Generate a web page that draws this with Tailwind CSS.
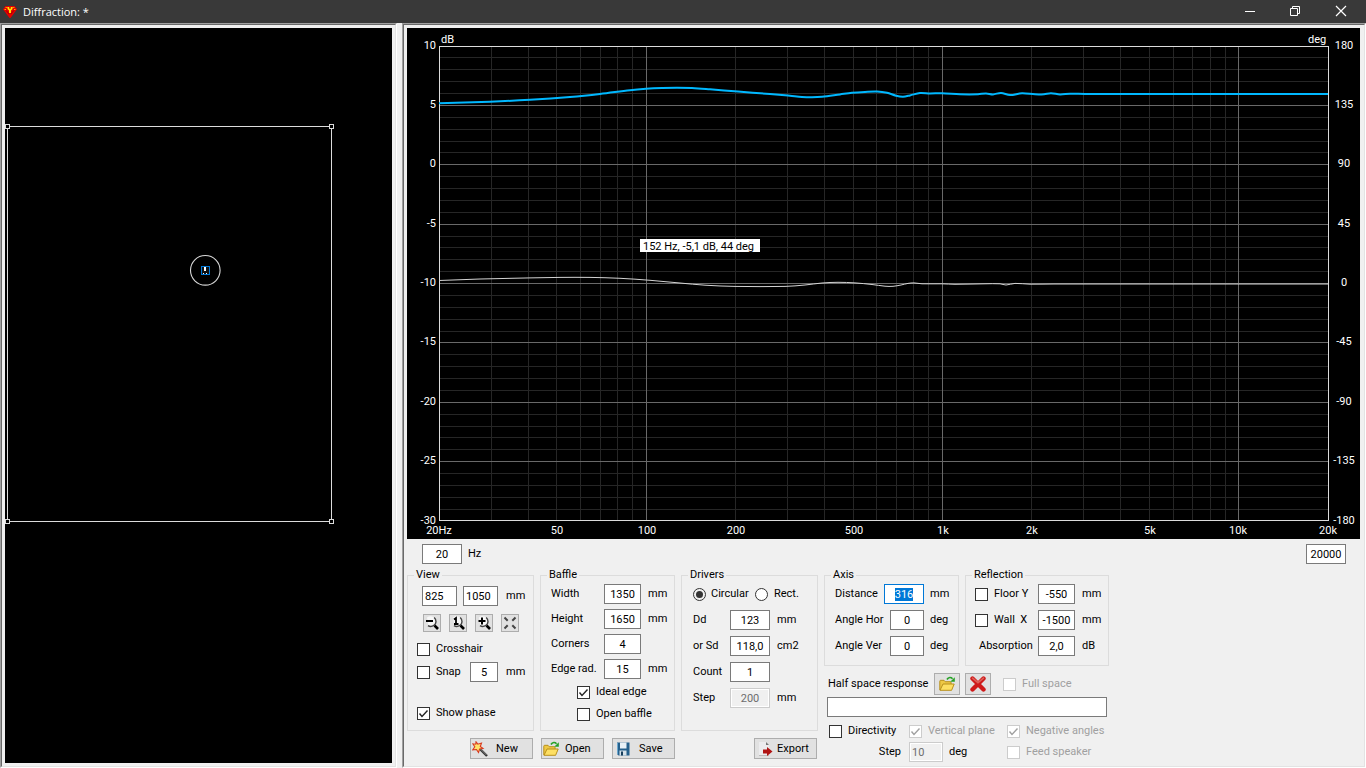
<!DOCTYPE html>
<html lang="en">
<head>
<meta charset="utf-8">
<meta name="viewport" content="width=device-width, initial-scale=1">
<title>Diffraction</title>
<script src="https://cdn.jsdelivr.net/npm/@tailwindcss/browser@4"></script>
</head>
<body class="flex min-h-screen flex-col bg-[#f0f0f0] font-[Roboto,'Liberation_Sans',sans-serif] text-[11px] leading-[14px] text-black">

<!-- Shared symbols -->
<svg class="hidden" aria-hidden="true">
  <symbol id="tick" viewBox="0 0 13 13"><path d="M2.5 6.5 5 9.5 10.5 3.5" fill="none" stroke="currentColor" stroke-width="1.4"/></symbol>
  <symbol id="folder" viewBox="0 0 16 16">
    <path d="M.8 14V5.200q0-.9.9-.9h3.300l1.200 1.400h5q.9 0 .9.900V8" fill="#eec845" stroke="#b8901c"/>
    <path d="M1 14.300 4 8h11.200l-2.600 6.300Z" fill="#fddf63" stroke="#b8901c"/>
    <path d="M8 3.500C9.500 1 12 1 13.500 2.700" fill="none" stroke="#27a127" stroke-width="1.700"/>
    <path d="M15.800 1.200v4.600h-4.600Z" fill="#27a127"/>
  </symbol>
  <symbol id="lens" viewBox="0 0 16 16">
    <path d="M3 2.600Q6.500 0 10 2.600 12.600 6 10.500 9.500 8 12 4.500 10.700" fill="#f8f8f8"/>
    <path d="M10.200 2.500C12.800 5 12.500 8.500 10 10.300 8 11.800 5.500 11.700 4 10.600" fill="none" stroke="#444" stroke-width="1.400"/>
    <path d="M10.500 10.500 14 14" stroke="#000" stroke-width="2.600" fill="none"/>
  </symbol>
</svg>

<header class="flex h-[23px] items-center bg-[#393939] text-white">
  <svg class="ml-[3px] h-[14px] w-[14px]" viewBox="0 0 14 14" aria-hidden="true">
    <path d="M2.500 1h9L14 4.200 7.500 13h-1L0 4.200Z" fill="#e60000"/>
    <path d="M2.500 2.500h2M9.500 2.500h2" stroke="#ff8a00" stroke-width="1"/>
    <path d="M1.500 4.500h1.500M11 4.500h1.500" stroke="#ffb000" stroke-width="1"/>
    <path d="M4.500 2h5v2L8 5.500V8H6V5.500L4.500 4Z" fill="#ffe600"/>
    <path d="M6.200 2h1.600v1.800H6.200Z" fill="#e00000"/>
    <path d="m3.200 5.500 3 3.500M10.800 5.500l-3 3.500" stroke="#8d0000" stroke-width=".8"/>
  </svg>
  <h1 class="ml-[6px] font-['Open_Sans','Noto_Sans',sans-serif] text-[11px]">Diffraction: *</h1>
  <div class="ml-auto flex items-center gap-[30px] pr-[16px]">
    <button type="button" aria-label="Minimize" class="h-4 w-4"><svg viewBox="0 0 16 16" class="h-4 w-4"><path d="M3 7.500h10" stroke="#fff"/></svg></button>
    <button type="button" aria-label="Restore" class="h-4 w-4"><svg viewBox="0 0 16 16" class="h-4 w-4"><path d="M2.500 4.500h7v7h-7ZM4.500 4.500v-2h7v7h-2" fill="none" stroke="#fff"/></svg></button>
    <button type="button" aria-label="Close" class="h-4 w-4"><svg viewBox="0 0 16 16" class="h-4 w-4"><path d="m2 2 10 10M12 2 2 12" stroke="#fff" stroke-width="1.200"/></svg></button>
  </div>
</header>

<div class="grid flex-1 grid-cols-[minmax(0,397fr)_minmax(0,964fr)] gap-[5px]">

  <!-- Baffle editor -->
  <section aria-label="Baffle editor" class="flex border-t border-r border-b border-l border-t-[#a0a0a0] border-r-white border-b-white border-l-[#a0a0a0]">
    <div class="flex flex-1 border border-t-[#696969] border-r-[#e3e3e3] border-b-[#e3e3e3] border-l-[#696969] p-[3px]">
      <div class="flex-1 bg-black">
        <svg class="block h-auto w-full" viewBox="5 28 387 735" role="img" aria-label="Baffle outline with driver">
          <g fill="none" stroke="#dcdcdc" shape-rendering="crispEdges">
            <path d="M7.500 126.500H331.500V521.500H7.500Z"/>
            <g fill="#000"><rect x="5.500" y="124.500" width="4" height="4"/><rect x="329.500" y="124.500" width="4" height="4"/><rect x="5.500" y="519.500" width="4" height="4"/><rect x="329.500" y="519.500" width="4" height="4"/></g>
          </g>
          <circle cx="205.300" cy="270.300" r="14.800" fill="none" stroke="#d8d8d8" stroke-width="1.100"/>
          <rect x="201.500" y="266.500" width="8" height="8" fill="#111" stroke="#0078d7" shape-rendering="crispEdges"/>
          <path d="M204 267h2v4h-2ZM203 273h1v1h-1ZM206 273h1v1h-1Z" fill="#fff" shape-rendering="crispEdges"/>
        </svg>
      </div>
    </div>
  </section>

  <section aria-label="Response" class="flex border-t border-r border-b border-l border-t-[#a0a0a0] border-r-white border-b-white border-l-[#a0a0a0]">
    <div class="min-w-0 flex-1 border border-t-[#696969] border-r-[#e3e3e3] border-b-[#e3e3e3] border-l-[#696969] pt-[3px] pr-1 pl-[3px]">

      <svg class="block h-auto w-full bg-black" viewBox="407 28 953 511" role="img" aria-label="Frequency response">
        <g fill="none" shape-rendering="crispEdges">
          <path id="minor" stroke="#262626"/>
          <path id="major" stroke="#696969"/>
          <path d="M439.500 46.500H1328.500V520.500H439.500Z" stroke="#dcdcdc"/>
        </g>
        <path id="phase" fill="none" stroke="#d4d4d4"/>
        <path id="level" fill="none" stroke="#00b8ff" stroke-width="2"/>
        <g fill="#fff">
          <text x="441" y="43">dB</text><text x="1308" y="43">deg</text>
          <g text-anchor="end">
            <text x="436" y="49">10</text><text x="436" y="108">5</text><text x="436" y="167">0</text><text x="436" y="227">-5</text><text x="436" y="286">-10</text><text x="436" y="345">-15</text><text x="436" y="405">-20</text><text x="436" y="464">-25</text><text x="436" y="524">-30</text>
          </g>
          <g text-anchor="middle">
            <text x="1344" y="49">180</text><text x="1344" y="108">135</text><text x="1344" y="167">90</text><text x="1344" y="227">45</text><text x="1344" y="286">0</text><text x="1344" y="345">-45</text><text x="1344" y="405">-90</text><text x="1344" y="464">-135</text><text x="1344" y="524">-180</text>
            <text x="439" y="534">20Hz</text><text x="557" y="534">50</text><text x="647" y="534">100</text><text x="736" y="534">200</text><text x="854" y="534">500</text><text x="943" y="534">1k</text><text x="1032" y="534">2k</text><text x="1150" y="534">5k</text><text x="1238" y="534">10k</text><text x="1328" y="534">20k</text>
          </g>
        </g>
        <rect x="640" y="239" width="120" height="13" fill="#fff"/>
        <text x="643" y="250" fill="#000">152 Hz, -5,1 dB, 44 deg</text>
      </svg>

      <div class="mt-[5px] flex items-center justify-between pr-[14px] pl-[15px]">
        <div class="flex items-center gap-[6px]"><input id="fmin" value="20" class="h-5 w-10 border border-[#7a7a7a] bg-white text-center"><label for="fmin">Hz</label></div>
        <input aria-label="Maximum frequency" value="20000" class="h-5 w-10 border border-[#7a7a7a] bg-white text-center">
      </div>

      <div class="mt-1 flex gap-[6px]">
        <div>
          <div class="flex gap-[6px]">

            <fieldset class="w-[127px] min-w-0 border border-[#dcdcdc]">
              <legend class="ml-[6px] px-[2px]">View</legend>
              <div class="pt-1 pl-[9px]">
                <div class="flex items-center gap-[6px] pl-[5px]">
                  <input aria-label="View width" value="825" class="h-5 w-[35px] border border-[#7a7a7a] bg-white pl-[2px]">
                  <input aria-label="View height" value="1050" class="h-5 w-[35px] border border-[#7a7a7a] bg-white pl-[2px]">
                  <span class="pl-[2px]">mm</span>
                </div>
                <div class="mt-2 flex gap-2 pl-[6px]">
                  <button type="button" aria-label="Zoom out" class="grid h-[18px] w-[18px] place-items-center border border-[#adadad] bg-[#e1e1e1]"><svg viewBox="0 0 16 16" class="h-4 w-4"><use href="#lens"/><path d="M2 6h7" stroke="#000" stroke-width="2"/></svg></button>
                  <button type="button" aria-label="Actual size" class="grid h-[18px] w-[18px] place-items-center border border-[#adadad] bg-[#e1e1e1]"><svg viewBox="0 0 16 16" class="h-4 w-4"><use href="#lens"/><path d="M4 4.500 6 3v6M4 9h4.500" fill="none" stroke="#000" stroke-width="1.800"/></svg></button>
                  <button type="button" aria-label="Zoom in" class="grid h-[18px] w-[18px] place-items-center border border-[#adadad] bg-[#e1e1e1]"><svg viewBox="0 0 16 16" class="h-4 w-4"><use href="#lens"/><path d="M2.500 6h7M6 2.500v7" stroke="#000" stroke-width="2"/></svg></button>
                  <button type="button" aria-label="Fit to window" class="grid h-[18px] w-[18px] place-items-center border border-[#adadad] bg-[#e1e1e1]"><svg viewBox="0 0 16 16" class="h-4 w-4"><path d="m2.500 2.500 3.200 3.200M13.500 2.500l-3.200 3.200M2.500 13.500l3.200-3.200M13.500 13.500l-3.200-3.200" stroke="#444" stroke-width="2"/></svg></button>
                </div>
                <label class="mt-[9px] flex h-4 items-center gap-[6px]"><input type="checkbox" class="h-[13px] w-[13px] appearance-none border border-[#333] bg-white">Crosshair</label>
                <div class="mt-[5px] flex h-5 items-center">
                  <label class="flex w-[53px] items-center gap-[6px]"><input type="checkbox" class="h-[13px] w-[13px] appearance-none border border-[#333] bg-white">Snap</label>
                  <input aria-label="Snap step" value="5" class="h-5 w-7 border border-[#7a7a7a] bg-white text-center"><span class="pl-2">mm</span>
                </div>
                <label class="mt-[23px] flex h-4 items-center gap-[6px]"><span class="grid"><input type="checkbox" checked class="peer h-[13px] w-[13px] appearance-none border border-[#333] bg-white [grid-area:1/1]"><svg class="invisible h-[13px] w-[13px] text-[#222] [grid-area:1/1] peer-checked:visible"><use href="#tick"/></svg></span>Show phase</label>
              </div>
            </fieldset>

            <fieldset class="w-[135px] min-w-0 border border-[#dcdcdc]">
              <legend class="ml-[6px] px-[2px]">Baffle</legend>
              <div class="grid grid-cols-[53px_37px_auto] items-center gap-y-[5px] pt-[2px] pl-[10px]">
                <label for="bw">Width</label><input id="bw" value="1350" class="h-5 border border-[#7a7a7a] bg-white text-center"><span class="pl-[7px]">mm</span>
                <label for="bh">Height</label><input id="bh" value="1650" class="h-5 border border-[#7a7a7a] bg-white text-center"><span class="pl-[7px]">mm</span>
                <label for="bc">Corners</label><input id="bc" value="4" class="h-5 border border-[#7a7a7a] bg-white text-center"><span></span>
                <label for="be">Edge rad.</label><input id="be" value="15" class="h-5 border border-[#7a7a7a] bg-white text-center"><span class="pl-[7px]">mm</span>
              </div>
              <div class="mt-[5px] flex flex-col gap-[6px] pl-9">
                <label class="flex h-4 items-center gap-[6px]"><span class="grid"><input type="checkbox" checked class="peer h-[13px] w-[13px] appearance-none border border-[#333] bg-white [grid-area:1/1]"><svg class="invisible h-[13px] w-[13px] text-[#222] [grid-area:1/1] peer-checked:visible"><use href="#tick"/></svg></span>Ideal edge</label>
                <label class="flex h-4 items-center gap-[6px]"><input type="checkbox" class="h-[13px] w-[13px] appearance-none border border-[#333] bg-white">Open baffle</label>
              </div>
              <div class="h-2"></div>
            </fieldset>

            <fieldset class="w-[137px] min-w-0 border border-[#dcdcdc]">
              <legend class="ml-[6px] px-[2px]">Drivers</legend>
              <div class="flex h-[22px] items-center pt-[2px] pl-[11px]">
                <label class="flex w-[62px] items-center gap-[5px]"><input type="radio" name="shape" checked class="h-[13px] w-[13px] appearance-none rounded-full border border-[#333] bg-white bg-clip-content p-[2px] checked:bg-[#333]">Circular</label>
                <label class="flex items-center gap-[6px]"><input type="radio" name="shape" class="h-[13px] w-[13px] appearance-none rounded-full border border-[#333] bg-white checked:bg-[#333]">Rect.</label>
              </div>
              <div class="grid grid-cols-[37px_40px_auto] items-center gap-y-[6px] pt-[6px] pl-[11px]">
                <label for="dd">Dd</label><input id="dd" value="123" class="h-5 border border-[#7a7a7a] bg-white text-center"><span class="pl-[7px]">mm</span>
                <label for="sd">or Sd</label><input id="sd" value="118,0" class="h-5 border border-[#7a7a7a] bg-white text-center"><span class="pl-[7px]">cm2</span>
                <label for="cnt">Count</label><input id="cnt" value="1" class="h-5 border border-[#7a7a7a] bg-white text-center"><span></span>
                <label for="dstep">Step</label><input id="dstep" disabled value="200" class="h-5 border border-[#ccc] bg-[#f0f0f0] text-center text-[#6d6d6d] shadow-[inset_0_0_0_1px_#fff]"><span class="pl-[7px]">mm</span>
              </div>
            </fieldset>
          </div>

          <div class="mt-[7px] flex gap-2 pl-[63px]">
            <button type="button" class="flex h-[21px] w-[63px] items-center gap-2 border border-[#adadad] bg-[#e1e1e1] pl-[1px]">
              <svg viewBox="0 0 16 16" class="h-4 w-4" aria-hidden="true"><path d="m7 7 8 8" stroke="#333" stroke-width="2.400"/><path d="m8 7.500 6.500 6.500" stroke="#aaa" stroke-width=".7"/><path d="m4 .8 1.800 2.400L9.500 2 8.300 5.500 11 7.500 7.600 8 6.500 11.500 4.500 8.500.8 8.800 2.800 5.800.8 2.800 3.800 3.200Z" fill="#ffe36a" stroke="#d93a20" stroke-width="1.100"/></svg>New</button>
            <button type="button" class="flex h-[21px] w-[63px] items-center gap-[6px] border border-[#adadad] bg-[#e1e1e1] pl-[1px]">
              <svg class="h-4 w-4" aria-hidden="true"><use href="#folder"/></svg>Open</button>
            <button type="button" class="flex h-[21px] w-[63px] items-center gap-2 border border-[#adadad] bg-[#e1e1e1] pl-[2px]">
              <svg viewBox="0 0 16 16" class="h-4 w-4" aria-hidden="true"><path d="M2 1.500h12.500v13H3.500L2 13Z" fill="#25608c"/><path d="M5 1.500h6.500v6H5Z" fill="#e8f1f7"/><path d="M4.500 9.500h7v5h-7Z" fill="#d6e2ea"/><path d="M6 10.500h2v4H6Z" fill="#173e5c"/><path d="M2.500 2v11" stroke="#6aa7cf"/></svg>Save</button>
            <button type="button" class="ml-[71px] flex h-[21px] w-[63px] items-center gap-[4px] border border-[#adadad] bg-[#e1e1e1] pl-[2px]">
              <svg viewBox="0 0 16 16" class="h-4 w-4" aria-hidden="true"><path d="M2 1h7l3 3v10H2Z" fill="#ececee"/><path d="M9 1l3 3H9Z" fill="#777"/><path d="M2 14.500h10" stroke="#bbb"/><path d="M6 8.500h4V6l5.500 4.500L10 15v-2.500H6Z" fill="#b01414"/></svg>Export</button>
          </div>
        </div>

        <div>
          <div class="flex gap-[6px]">
            <fieldset class="h-[98px] w-[135px] min-w-0 border border-[#dcdcdc]">
              <legend class="ml-[6px] px-[2px]">Axis</legend>
              <div class="flex flex-col gap-[6px] pt-[2px] pr-[11px] pl-[10px]">
                <div class="flex items-center"><label for="dist" class="flex-1">Distance</label><input id="dist" value="316" autofocus class="h-5 w-10 border border-[#0078d7] bg-white text-center outline-none selection:bg-[#0078d7] selection:text-white"><span class="w-[23px] pl-[6px]">mm</span></div>
                <div class="flex items-center"><label for="ah" class="flex-1">Angle Hor</label><input id="ah" value="0" class="h-5 w-[34px] border border-[#7a7a7a] bg-white text-center"><span class="w-[23px] pl-[6px]">deg</span></div>
                <div class="flex items-center"><label for="av" class="flex-1">Angle Ver</label><input id="av" value="0" class="h-5 w-[34px] border border-[#7a7a7a] bg-white text-center"><span class="w-[23px] pl-[6px]">deg</span></div>
              </div>
            </fieldset>
            <fieldset class="h-[98px] w-[144px] min-w-0 border border-[#dcdcdc]">
              <legend class="ml-[6px] px-[2px]">Reflection</legend>
              <div class="grid grid-cols-[63px_37px_auto] items-center gap-y-[6px] pt-[2px] pl-[9px]">
                <label class="flex items-center gap-[6px]"><input type="checkbox" class="h-[13px] w-[13px] appearance-none border border-[#333] bg-white">Floor Y</label><input aria-label="Floor Y" value="-550" class="h-5 border border-[#7a7a7a] bg-white text-center"><span class="pl-[7px]">mm</span>
                <label class="flex items-center gap-[6px] whitespace-pre"><input type="checkbox" class="h-[13px] w-[13px] appearance-none border border-[#333] bg-white">Wall  X</label><input aria-label="Wall X" value="-1500" class="h-5 border border-[#7a7a7a] bg-white text-center"><span class="pl-[7px]">mm</span>
                <label for="abs" class="pl-1">Absorption</label><input id="abs" value="2,0" class="h-5 border border-[#7a7a7a] bg-white text-center"><span class="pl-[7px]">dB</span>
              </div>
            </fieldset>
          </div>

          <div class="mt-[7px] flex h-[22px] items-center pl-1">
            <label for="hsr" class="w-[106px]">Half space response</label>
            <button type="button" aria-label="Open response" class="grid h-[22px] w-[26px] place-items-center border border-[#adadad] bg-[#e1e1e1]"><svg class="h-4 w-4"><use href="#folder"/></svg></button>
            <button type="button" aria-label="Clear response" class="ml-[5px] grid h-[22px] w-[26px] place-items-center border border-[#adadad] bg-[#e1e1e1]"><svg viewBox="0 0 16 16" class="h-4 w-4"><path d="m2.500 2.500 11 11M13.500 2.500l-11 11" stroke="#cf1a1a" stroke-width="4.400" stroke-linecap="round"/><path d="m2.500 2.200 5.500 4.500 5.500-4.500" fill="none" stroke="#dd6058" stroke-width="1.600" stroke-linecap="round"/></svg></button>
            <label class="ml-3 flex items-center gap-[6px] text-[#a0a0a0]"><input type="checkbox" disabled class="h-[13px] w-[13px] appearance-none border border-[#ccc] bg-white">Full space</label>
          </div>
          <input id="hsr" value="" class="mt-[2px] ml-[3px] block h-5 w-[280px] border border-[#7a7a7a] bg-white px-1">
          <div class="mt-[6px] grid grid-cols-[80px_98px_auto] items-center pl-[5px]">
            <label class="flex h-4 items-center gap-[6px]"><input type="checkbox" class="h-[13px] w-[13px] appearance-none border border-[#333] bg-white">Directivity</label>
            <label class="flex h-4 items-center gap-[6px] text-[#a0a0a0]"><span class="grid"><input type="checkbox" checked disabled class="peer h-[13px] w-[13px] appearance-none border border-[#ccc] bg-white [grid-area:1/1]"><svg class="invisible h-[13px] w-[13px] [grid-area:1/1] peer-checked:visible"><use href="#tick"/></svg></span>Vertical plane</label>
            <label class="flex h-4 items-center gap-[6px] text-[#a0a0a0]"><span class="grid"><input type="checkbox" checked disabled class="peer h-[13px] w-[13px] appearance-none border border-[#ccc] bg-white [grid-area:1/1]"><svg class="invisible h-[13px] w-[13px] [grid-area:1/1] peer-checked:visible"><use href="#tick"/></svg></span>Negative angles</label>
            <label for="dirstep" class="mt-[3px] pr-2 text-right">Step</label>
            <div class="mt-[3px] flex items-center gap-[6px]"><input id="dirstep" disabled value="10" class="h-5 w-[34px] border border-[#ccc] bg-[#f0f0f0] pl-[2px] text-[#6d6d6d] shadow-[inset_0_0_0_1px_#fff]">deg</div>
            <label class="mt-[3px] flex items-center gap-[6px] text-[#a0a0a0]"><input type="checkbox" disabled class="h-[13px] w-[13px] appearance-none border border-[#ccc] bg-white">Feed speaker</label>
          </div>
        </div>
      </div>
    </div>
  </section>
</div>

<script>
  // Plot grid: 20 Hz to 20 kHz on a log axis, 10 to -30 dB in 1 dB steps
  const left = 439, right = 1328, top0 = 46, bottom = 521;
  let minor = '', major = '';
  for (let k = 1; k < 40; k++) {
    const y = Math.floor(top0 + k * (bottom - top0) / 40) + 0.5;
    const seg = `M${left} ${y}H${right}`;
    if (k % 5) minor += seg; else major += seg;
  }
  for (let dec = 10; dec <= 10000; dec *= 10) {
    for (let n = 1; n < 10; n++) {
      const f = dec * n;
      if (f <= 20 || f >= 20000) continue;
      const x = Math.floor(left + (right - left) * Math.log10(f / 20) / 3) + 0.5;
      const seg = `M${x} ${top0}V${bottom}`;
      if (n > 1) minor += seg; else major += seg;
    }
  }
  document.getElementById('minor').setAttribute('d', minor);
  document.getElementById('major').setAttribute('d', major);

  // Smooth curve through sampled points
  function curve(p) {
    let d = `M${p[0]}`;
    for (let i = 0; i < p.length - 1; i++) {
      const a = p[i - 1] || p[i], b = p[i], c = p[i + 1], e = p[i + 2] || c;
      const w = (c[0] - b[0]) / 3;
      const s1 = (c[1] - a[1]) / (c[0] - a[0]), s2 = (e[1] - b[1]) / (e[0] - b[0]);
      d += `C${b[0] + w},${b[1] + s1 * w} ${c[0] - w},${c[1] - s2 * w} ${c}`;
    }
    return d;
  }
  document.getElementById('level').setAttribute('d', curve([[439,103.3],[490,101.7],[530,99.8],[570,97],[600,94],[630,90.2],[646,88.8],[662,88],[677,87.7],[692,88],[710,89.3],[738,91.6],[770,94],[790,95.8],[802,97],[812,97.3],[822,96.8],[840,94.4],[852,92.8],[865,91.9],[877,91.5],[887,92.8],[896,95.7],[903,96.7],[910,95.4],[920,93],[930,93.5],[942,93.2],[960,94.3],[978,94.3],[986,93.4],[993,94.4],[1001,92.9],[1010,95.1],[1022,93.3],[1035,94.3],[1044,94.2],[1051,93.2],[1060,94.4],[1070,93.7],[1085,94],[1328,94]]));
  document.getElementById('phase').setAttribute('d', curve([[439,280.5],[480,279],[530,277.9],[560,277.4],[590,277.4],[620,278.3],[650,280.3],[680,283],[705,285.2],[735,286.4],[785,286.4],[805,285],[822,283],[838,282.3],[855,282.9],[872,284.5],[885,286.2],[893,286.3],[901,285],[908,283.4],[914,282.9],[922,283.8],[942,283.8],[955,284.3],[985,283.8],[1000,283.8],[1006,285],[1015,283.4],[1030,284.2],[1054,284],[1100,284],[1328,284]]));
  const dist = document.getElementById('dist');
  dist.focus();
  dist.select();
</script>
</body>
</html>
